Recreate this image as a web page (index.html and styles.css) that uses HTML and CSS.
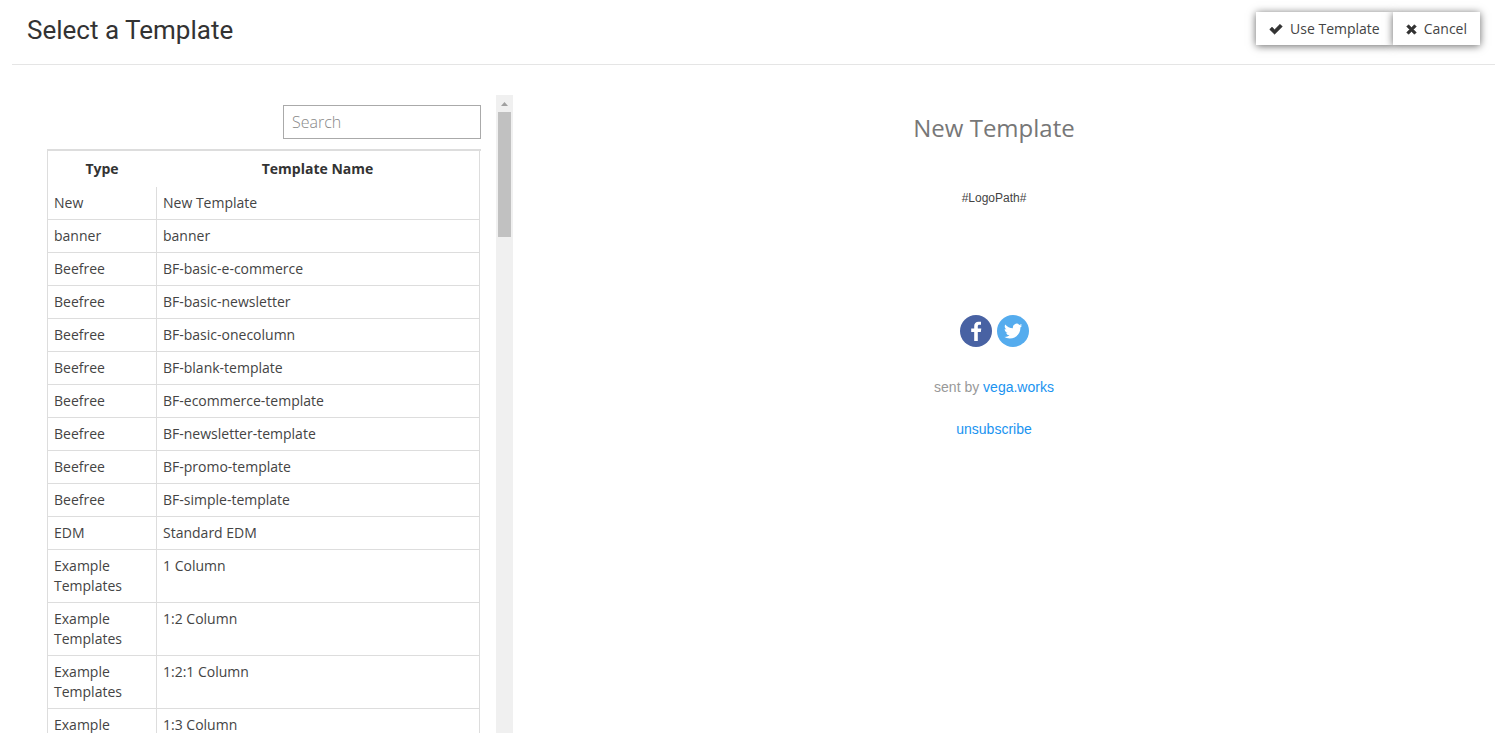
FILE: index.html
```html
<!DOCTYPE html>
<html lang="en">
<head>
    <meta charset="UTF-8">
    <meta name="viewport" content="width=device-width, initial-scale=1.0">
    <title>Select a Template</title>
    <link rel="stylesheet" href="styles.css">
</head>
<body>
    <header class="page-header">
        <h1>Select a Template</h1>
        <div class="btn-group">
            <button type="button" class="btn">
                <svg class="btn-icon" viewBox="0 0 14 14" aria-hidden="true"><path d="M3 5.1 5.6 7.7 11 2.3 13.3 4.6 5.6 12.2.7 7.4z" fill="#333" stroke="#333" stroke-width=".6" stroke-linejoin="round"/></svg>
                Use Template
            </button>
            <button type="button" class="btn">
                <svg class="btn-icon btn-icon-small" viewBox="0 0 11 14" aria-hidden="true"><path d="M2.6 2.7 5.5 5.6 8.4 2.7 10.3 4.6 7.4 7.5 10.3 10.4 8.4 12.3 5.5 9.4 2.6 12.3.7 10.4 3.6 7.5.7 4.6z" fill="#333" stroke="#333" stroke-width=".6" stroke-linejoin="round"/></svg>
                Cancel
            </button>
        </div>
    </header>

    <main class="content">
        <section class="list-pane">
            <div class="list">
                <div class="list-search">
                    <input type="search" class="search" placeholder="Search" aria-label="Search">
                </div>
                <div class="table-wrap">
                    <table class="templates">
                        <thead>
                            <tr><th class="col-type">Type</th><th>Template Name</th></tr>
                        </thead>
                        <tbody>
                            <tr><td>New</td><td>New Template</td></tr>
                            <tr><td>banner</td><td>banner</td></tr>
                            <tr><td>Beefree</td><td>BF-basic-e-commerce</td></tr>
                            <tr><td>Beefree</td><td>BF-basic-newsletter</td></tr>
                            <tr><td>Beefree</td><td>BF-basic-onecolumn</td></tr>
                            <tr><td>Beefree</td><td>BF-blank-template</td></tr>
                            <tr><td>Beefree</td><td>BF-ecommerce-template</td></tr>
                            <tr><td>Beefree</td><td>BF-newsletter-template</td></tr>
                            <tr><td>Beefree</td><td>BF-promo-template</td></tr>
                            <tr><td>Beefree</td><td>BF-simple-template</td></tr>
                            <tr><td>EDM</td><td>Standard EDM</td></tr>
                            <tr><td>Example Templates</td><td>1 Column</td></tr>
                            <tr><td>Example Templates</td><td>1:2 Column</td></tr>
                            <tr><td>Example Templates</td><td>1:2:1 Column</td></tr>
                            <tr><td>Example Templates</td><td>1:3 Column</td></tr>
                        </tbody>
                    </table>
                </div>
            </div>
            <div class="scrollbar" aria-hidden="true">
                <svg class="scroll-arrow" viewBox="0 0 17 17"><path d="M5 11 8.5 7 12 11z" fill="#a0a0a0"/></svg>
                <div class="scroll-thumb"></div>
            </div>
        </section>

        <section class="preview">
            <h2>New Template</h2>
            <p class="logo-path">#LogoPath#</p>
            <div class="social">
                <a href="#" aria-label="Facebook">
                    <svg viewBox="0 0 32 32"><circle cx="16" cy="16" r="16" fill="#4862a3"/><path d="M17.800 26V17.100h3l.5-3.500h-3.500v-2.200c0-1 .3-1.700 1.700-1.700h1.500V6.800c-.3 0-1.300-.1-2.500-.1-2.700 0-4.300 1.600-4.300 4.400v2.500h-3v3.500h3V26z" fill="#fff"/></svg>
                </a>
                <a href="#" aria-label="Twitter">
                    <svg viewBox="0 0 32 32"><circle cx="16" cy="16" r="16" fill="#55acee"/><path transform="translate(7 7) scale(.76)" d="M23.950 4.570a10 10 0 0 1-2.820.770 4.960 4.960 0 0 0 2.160-2.720c-.950.550-2 .960-3.130 1.180a4.920 4.920 0 0 0-8.380 4.480C7.690 8.090 4.070 6.130 1.640 3.160a4.800 4.800 0 0 0-.670 2.480c0 1.710.870 3.210 2.190 4.100a4.900 4.900 0 0 1-2.230-.620v.060a4.920 4.920 0 0 0 3.950 4.830 5 5 0 0 1-2.210.080 4.940 4.940 0 0 0 4.600 3.420A9.870 9.870 0 0 1 0 19.540a14 14 0 0 0 7.550 2.210c9.050 0 14-7.500 14-13.980 0-.210 0-.420-.020-.630a9.940 9.940 0 0 0 2.420-2.570z" fill="#fff"/></svg>
                </a>
            </div>
            <p class="footer-text">sent by <a href="#">vega.works</a></p>
            <p class="footer-text"><a href="#">unsubscribe</a></p>
        </section>
    </main>
</body>
</html>
```

FILE: styles.css
```css
* {
    box-sizing: border-box;
}

body {
    margin: 0;
    height: 100vh;
    overflow: hidden;
    display: flex;
    flex-direction: column;
    background-color: #fff;
    color: #444;
    font-family: "Open Sans", sans-serif;
    font-size: 14px;
    line-height: 20px;
}

.page-header {
    display: flex;
    justify-content: space-between;
    align-items: flex-start;
    margin: 0 9px 0 12px;
    padding: 12px 15px;
    border-bottom: 1px solid #e5e5e5;
}

.page-header h1 {
    margin: 0;
    padding-bottom: 4px;
    color: #333;
    font-family: Roboto, sans-serif;
    font-size: 26px;
    font-weight: 400;
    line-height: 36px;
}

.btn-group {
    display: flex;
}

.btn {
    display: flex;
    align-items: center;
    gap: 7px;
    height: 33px;
    padding: 0 13px;
    border: none;
    background-color: #fff;
    color: #444;
    font: inherit;
    box-shadow: 0 1px 8px rgba(0, 0, 0, 0.6);
    cursor: pointer;
}

.btn-icon {
    width: 14px;
    height: 14px;
}

.btn-icon-small {
    width: 11px;
}

.content {
    flex: 1;
    min-height: 0;
    display: grid;
    grid-template-columns: 1fr 2fr;
    padding: 30px 29px 0 32px;
}

.list-pane {
    display: flex;
    min-height: 0;
    overflow: hidden;
}

.list {
    flex: 1;
    padding: 10px 15px 0;
}

.list-search {
    display: flex;
    justify-content: flex-end;
    margin-bottom: 10px;
}

.search {
    width: 198px;
    height: 34px;
    padding: 0 8px;
    border: 1px solid #aaa;
    border-radius: 0;
    background-color: #fff;
    font-family: inherit;
    font-size: 16px;
    font-weight: 300;
    appearance: none;
}

.search::placeholder {
    color: #888;
}

.table-wrap {
    padding-right: 1px;
    border-top: 2px solid #ddd;
}

.templates {
    width: 100%;
    table-layout: fixed;
    border-collapse: separate;
    border-spacing: 0;
    border: solid #ddd;
    border-width: 0 1px;
}

.templates th {
    padding: 8px 6px;
    color: #333;
    font-weight: 700;
}

.templates td {
    padding: 6px;
    border-bottom: 1px solid #ddd;
    vertical-align: top;
}

.templates td + td {
    border-left: 1px solid #ddd;
}

.col-type {
    width: 108px;
}

.scrollbar {
    width: 17px;
    background-color: #f0f0f0;
}

.scroll-arrow {
    display: block;
    width: 17px;
    height: 17px;
}

.scroll-thumb {
    height: 125px;
    margin: 0 2px;
    background-color: #c1c1c1;
}

.preview {
    display: flex;
    flex-direction: column;
    align-items: center;
    padding-top: 16px;
    font-family: "Liberation Sans", Arial, sans-serif;
}

.preview h2 {
    margin: 0 0 44px;
    color: #777;
    font-family: "Open Sans", sans-serif;
    font-size: 24px;
    font-weight: 400;
    line-height: 34px;
}

.logo-path {
    margin: 0;
    color: #444;
    font-size: 12px;
    line-height: 18px;
}

.social {
    display: flex;
    gap: 5px;
    margin: 108px 0 30px;
}

.social svg {
    display: block;
    width: 32px;
    height: 32px;
}

.footer-text {
    margin: 0 0 22px;
    color: #999;
    font-size: 14px;
}

.footer-text a {
    color: #1a93f0;
    text-decoration: none;
}
```
